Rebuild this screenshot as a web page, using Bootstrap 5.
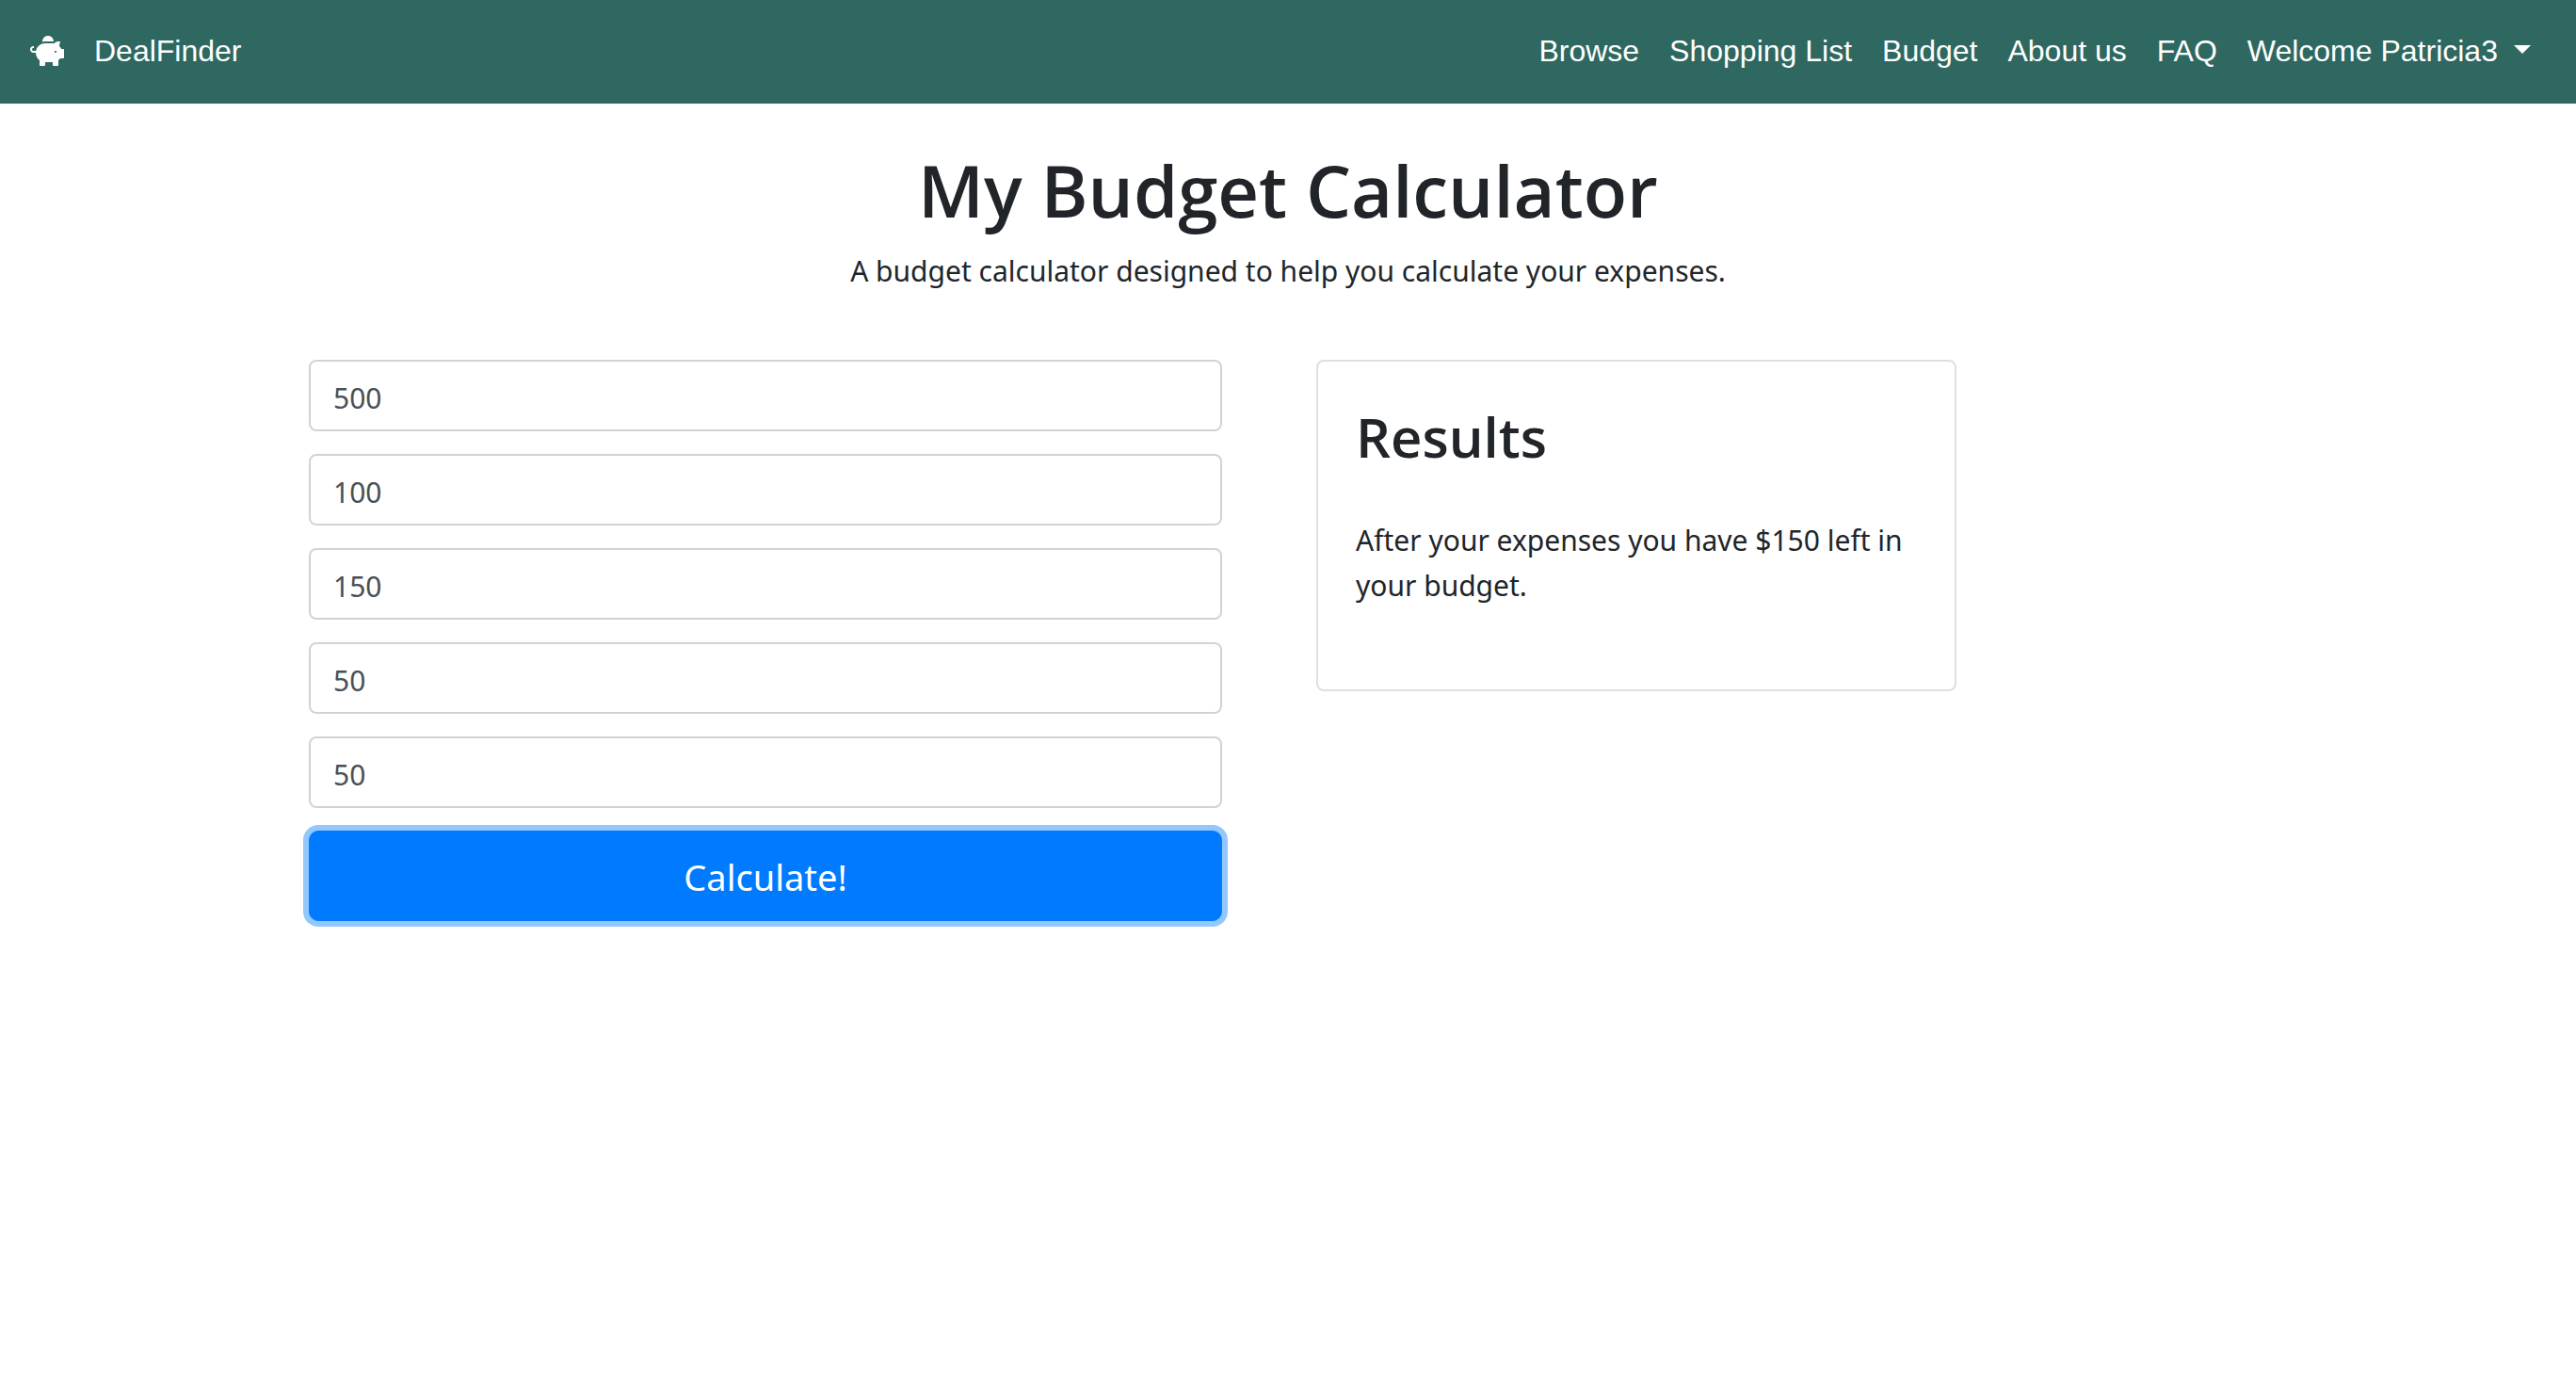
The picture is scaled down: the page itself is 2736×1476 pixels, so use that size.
<!DOCTYPE html>
<html lang="en">
<head>
<meta charset="utf-8">
<meta name="viewport" content="width=device-width, initial-scale=1">
<title>DealFinder - Budget</title>
<link href="https://cdn.jsdelivr.net/npm/bootstrap@5.3.0/dist/css/bootstrap.min.css" rel="stylesheet">
<style>
  html { font-size: 32px; }
  body { font-family: "Segoe UI", "Noto Sans", sans-serif; font-size: 30px; line-height: 48px; color: #212529; background: #fff; }
  h1, h2 { font-family: "Segoe UI", "Open Sans", sans-serif; font-weight: 600; }
  .site-nav { background: #2e6860; font-family: Arial, "Liberation Sans", sans-serif; font-size: 32px; min-height: 110px; padding: 0 32px 2px; }
  .site-nav .navbar-brand, .site-nav .nav-link { color: #fff; font-size: 32px; line-height: 48px; padding-top: 0; padding-bottom: 0; }
  .site-nav .navbar-brand { gap: 32px; }
  .site-nav .nav-link { padding-left: 16px; padding-right: 16px; }
  .site-nav .navbar-nav { --bs-nav-link-padding-y: 0; }
  .brand-icon { width: 36px; height: 32px; fill: #fff; }
  .page-box { max-width: 2280px; padding: 0 30px 48px; }
  .page-head { padding: 44px 0 70px; }
  .page-title { font-size: 76px; line-height: 96px; margin-bottom: 14px; }
  .calc-col { padding: 0 70px; }
  .result-col { padding: 0 30px; }
  .calc-form { gap: 24px; }
  .calc-form .form-control { height: 76px; padding: 14px 24px 10px; border: 2px solid #ced4da; border-radius: 8px; font-size: 30px; line-height: 48px; color: #495057; }
  .calc-btn { --bs-btn-bg: #007bff; --bs-btn-border-color: #007bff; height: 96px; padding: 2px 0 0; border-radius: 10px; font-size: 38px; line-height: 60px; box-shadow: 0 0 0 6px #93c8ff; }
  .result-card { border: 2px solid #dfdfdf; border-radius: 8px; padding: 42px 40px 38px; }
  .result-title { font-size: 58px; line-height: 76px; margin: 0 0 48px; }
  .result-text { margin: 0 0 48px; }
</style>
<script src="https://cdn.jsdelivr.net/npm/bootstrap@5.3.0/dist/js/bootstrap.bundle.min.js"></script>
</head>
<body>
<nav class="navbar navbar-expand site-nav">
  <a class="navbar-brand d-flex align-items-center m-0" href="#">
    <svg class="brand-icon" viewBox="0 0 576 512" aria-hidden="true"><path d="M560 224h-29.500c-8.800-20-21.600-37.700-37.400-52.500L512 96h-32c-29.400 0-55.400 13.500-73 34.300-7.600-1.100-15.100-2.300-23-2.300H256c-77.400 0-141.900 55-156.800 128H56c-14.800 0-26.500-13.500-23.500-28.800C34.700 215.800 45.400 208 57 208h1c3.300 0 6-2.700 6-6v-20c0-3.300-2.700-6-6-6-28.500 0-53.900 20.400-57.500 48.600C-3.900 258.800 22.700 288 56 288h40c0 52.200 25.400 98.100 64 127.300V496c0 8.800 7.200 16 16 16h64c8.800 0 16-7.200 16-16v-48h128v48c0 8.800 7.200 16 16 16h64c8.800 0 16-7.200 16-16v-80.700c11.800-8.900 22.300-19.400 31.300-31.300H560c8.800 0 16-7.200 16-16V240c0-8.800-7.200-16-16-16zm-128 64c-8.800 0-16-7.200-16-16s7.200-16 16-16 16 7.200 16 16-7.200 16-16 16zM256 96h128c5.400 0 10.700.4 15.900.8 0-.3.1-.5.1-.8 0-53-43-96-96-96s-96 43-96 96c0 2.100.5 4.100.6 6.200 15.200-3.900 31-6.200 47.400-6.200z"/></svg>
    <span>DealFinder</span>
  </a>
  <ul class="navbar-nav ms-auto">
    <li class="nav-item"><a class="nav-link" href="#">Browse</a></li>
    <li class="nav-item"><a class="nav-link" href="#">Shopping List</a></li>
    <li class="nav-item"><a class="nav-link" href="#">Budget</a></li>
    <li class="nav-item"><a class="nav-link" href="#">About us</a></li>
    <li class="nav-item"><a class="nav-link" href="#">FAQ</a></li>
    <li class="nav-item dropdown"><a class="nav-link dropdown-toggle" href="#" role="button" data-bs-toggle="dropdown" aria-expanded="false">Welcome Patricia3 </a></li>
  </ul>
</nav>
<main class="container-fluid page-box">
  <header class="page-head text-center">
    <h1 class="page-title">My Budget Calculator</h1>
    <p class="m-0">A budget calculator designed to help you calculate your expenses.</p>
  </header>
  <div class="row g-0">
    <section class="col-6 calc-col">
      <form class="calc-form d-flex flex-column">
        <input class="form-control" type="text" value="500" aria-label="Budget">
        <input class="form-control" type="text" value="100" aria-label="Expense 1">
        <input class="form-control" type="text" value="150" aria-label="Expense 2">
        <input class="form-control" type="text" value="50" aria-label="Expense 3">
        <input class="form-control" type="text" value="50" aria-label="Expense 4">
        <button class="btn btn-primary calc-btn w-100" type="button">Calculate!</button>
      </form>
    </section>
    <section class="col-4 result-col">
      <div class="card result-card">
        <h2 class="result-title">Results</h2>
        <p class="result-text">After your expenses you have $150 left in your budget.</p>
      </div>
    </section>
  </div>
</main>
</body>
</html>
